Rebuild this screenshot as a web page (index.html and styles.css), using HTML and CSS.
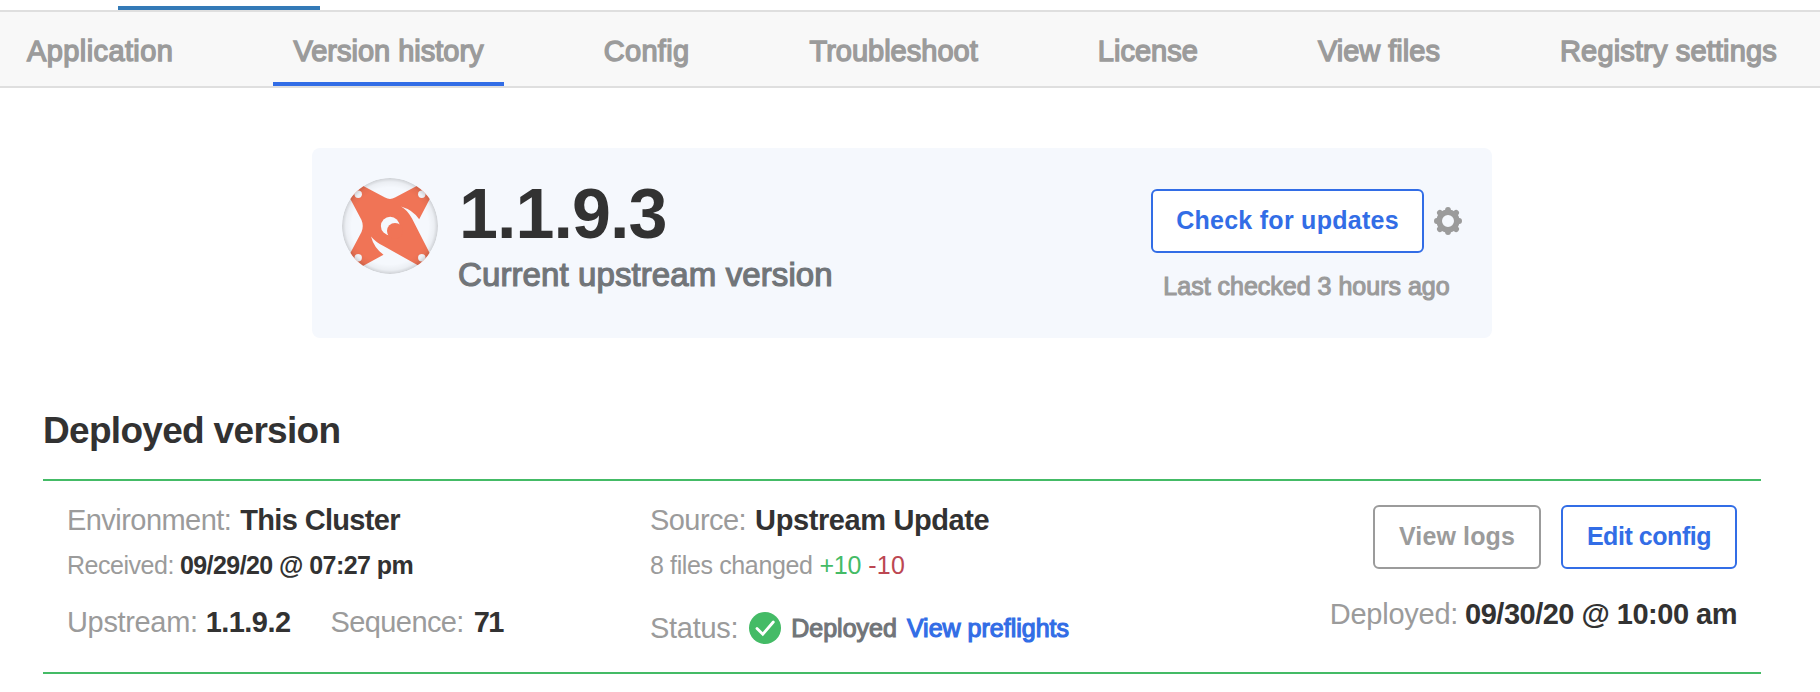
FILE: index.html
```
<!DOCTYPE html>
<html lang="en">
<head>
<meta charset="utf-8">
<title>Version history</title>
<link rel="stylesheet" href="styles.css">
</head>
<body>
<header class="topbar"><div class="topbar-active"></div></header>
<nav class="tabs">
  <a class="tab tab-application">Application</a>
  <a class="tab active">Version history</a>
  <a class="tab tab-config">Config</a>
  <a class="tab">Troubleshoot</a>
  <a class="tab">License</a>
  <a class="tab">View files</a>
  <a class="tab tab-registry">Registry settings</a>
</nav>
<main>
  <section class="card">
    <svg class="logo" viewBox="0 0 96 96">
      <defs>
        <clipPath id="disc"><circle cx="48" cy="48" r="48"/></clipPath>
        <radialGradient id="rim">
          <stop offset=".8" stop-color="#000" stop-opacity="0"/>
          <stop offset=".92" stop-color="#000" stop-opacity=".04"/>
          <stop offset="1" stop-color="#000" stop-opacity=".16"/>
        </radialGradient>
      </defs>
      <g clip-path="url(#disc)">
        <path fill="#f07456" d="M9 1.500L43 19.500Q48 22.300 53 19.500L87 1.500L94.500 8L77.200 41.300Q71 32 59 28.500Q65 31.500 70 40.500L94 87.500L87 93.500L41.500 68Q34 64.500 29 58.500Q32 70 41.500 76.700L9 94.500L2 87L19.500 54Q22 48 19.500 42L2 9Z"/>
        <g fill="#f5f8fd"><circle cx="16.200" cy="16.200" r="3.700"/><circle cx="79.800" cy="16.200" r="3.700"/><circle cx="16.200" cy="79.800" r="3.700"/><circle cx="79.800" cy="79.800" r="3.700"/><circle cx="48.200" cy="48" r="9.300"/></g>
        <circle cx="53" cy="53" r="8" fill="#f07456"/>
        <circle cx="48" cy="48" r="48" fill="url(#rim)"/>
      </g>
    </svg>
    <div class="card-text">
      <div class="version">1.1.9.3</div>
      <div class="caption">Current upstream version</div>
    </div>
    <div class="updates">
      <div class="updates-row">
        <button class="btn btn-check">Check for updates</button>
        <svg class="gear" viewBox="-14 -14 28 28" fill="none" stroke="#9b9b9b">
          <circle r="8.800" stroke-width="5.600"/>
          <path stroke-width="5.800" stroke-linecap="round" d="M0-11.100V-9M0 11.100V9M-11.100 0H-9M11.100 0H9M-8.100-8.100L-7-7M8.100 8.100L7 7M-8.100 8.100L-7 7M8.100-8.100L7-7"/>
        </svg>
      </div>
      <div class="checked">Last checked 3 hours ago</div>
    </div>
  </section>
  <h2 class="heading">Deployed version</h2>
  <section class="panel">
    <div class="col col-first">
      <div class="line"><span class="label environment">Environment:</span><b class="cluster">This Cluster</b></div>
      <div class="line small"><span class="label">Received:</span><b>09/29/20 @ 07:27 pm</b></div>
      <div class="line last"><span class="label upstream">Upstream:</span><b>1.1.9.2</b><span class="label sequence">Sequence:</span><b class="number">71</b></div>
    </div>
    <div class="col">
      <div class="line"><span class="label environment">Source:</span><b class="source">Upstream Update</b></div>
      <div class="line small files"><span>8 files changed</span><span class="added">+10</span><span class="removed">-10</span></div>
      <div class="line status"><span class="label">Status:</span>
        <svg class="check" viewBox="0 0 32 32"><circle cx="16" cy="16" r="16" fill="#44bb66"/><path d="M8 16.400L13.800 22.200L24.300 10" fill="none" stroke="#fff" stroke-width="2.800" stroke-linecap="round"/></svg>
        <span class="deployed">Deployed</span><a class="preflights">View preflights</a></div>
    </div>
    <div class="col col-right">
      <div class="actions"><button class="btn btn-logs">View logs</button><button class="btn btn-edit">Edit config</button></div>
      <div class="line date"><span class="label">Deployed:</span><b>09/30/20 @ 10:00 am</b></div>
    </div>
  </section>
</main>
</body>
</html>
```
FILE: styles.css
```
* { box-sizing: border-box; }
body {
  margin: 0;
  background: #fff;
  color: #323232;
  font-family: "Liberation Sans", Arial, sans-serif;
  white-space: nowrap;
}
.topbar { height: 12px; border-bottom: 2px solid #dfdfdf; padding: 6px 0 0 118px; }
.topbar-active { width: 202px; height: 4px; background: #337ab7; }
.tabs {
  display: flex;
  justify-content: space-between;
  height: 76px;
  padding: 0 23px 0 7px;
  background: #f8f8f8;
  border-bottom: 2px solid #dfdfdf;
}
.tab {
  padding: 4px 20px 0;
  font-size: 29px;
  line-height: 71px;
  color: #9b9b9b;
  -webkit-text-stroke: 1.4px #9b9b9b;
}
.tab-application { letter-spacing: .4px; }
.tab-config { letter-spacing: .3px; }
.tab-registry { letter-spacing: .15px; }
.tab.active { border-bottom: 4px solid #326de6; height: 74px; }
.card {
  display: flex;
  width: 1180px;
  height: 190px;
  margin: 60px 0 0 312px;
  padding: 30px;
  border-radius: 8px;
  background: #f5f8fd;
}
.logo { width: 96px; height: 96px; flex: none; }
.card-text { margin-left: 20px; }
.version { font-size: 70px; line-height: 70px; font-weight: bold; letter-spacing: -.94px; padding: 1px 0 0 1px; height: 71px; }
.caption { margin-top: 6px; font-size: 33px; line-height: 40px; color: #717579; -webkit-text-stroke: 1.2px #717579; letter-spacing: .1px; }
.updates { margin-left: auto; padding-top: 11px; text-align: center; }
.updates-row { display: flex; align-items: center; }
.btn {
  height: 64px;
  padding: 0 0 2px;
  border: 2px solid #326de6;
  border-radius: 6px;
  background: #fff;
  color: #326de6;
  font: bold 25px "Liberation Sans", Arial, sans-serif;
  white-space: nowrap;
}
.btn-check { width: 273px; letter-spacing: .27px; }
.gear { width: 28px; height: 28px; margin-left: 10px; }
.checked { margin-top: 18px; font-size: 25px; line-height: 30px; color: #9b9b9b; -webkit-text-stroke: 1.1px #9b9b9b; }
.heading { margin: 71px 0 26px 43px; font-size: 37px; line-height: 44px; letter-spacing: -.69px; }
.panel {
  display: flex;
  width: 1718px;
  height: 195px;
  margin-left: 43px;
  padding: 21px 24px 0;
  border-top: 2px solid #44bb66;
  border-bottom: 2px solid #44bb66;
}
.col-first { width: 583px; }
.col-right { margin-left: auto; padding-top: 3px; }
.line { display: flex; align-items: center; height: 36px; font-size: 29px; line-height: 36px; letter-spacing: -.55px; }
.label { color: #9b9b9b; margin-right: 8px; }
.environment { margin-right: 9px; }
.cluster { letter-spacing: -.66px; }
.source { letter-spacing: -.39px; }
.small { height: 30px; margin-top: 12px; font-size: 25px; line-height: 30px; }
.small .label { margin-right: 6px; letter-spacing: -.47px; }
.small b { letter-spacing: -.57px; }
.last { margin-top: 24px; }
.upstream { letter-spacing: -.34px; }
.sequence { margin: 0 10px 0 40px; letter-spacing: -.6px; }
.number { letter-spacing: -1.8px; }
.files { gap: 7px; color: #9b9b9b; letter-spacing: -.38px; }
.added { color: #44bb66; letter-spacing: -.25px; }
.removed { color: #bc4752; letter-spacing: .3px; }
.status { margin-top: 30px; letter-spacing: -.29px; }
.status .label { margin-right: 11px; }
.check { width: 32px; height: 32px; margin-right: 10px; }
.deployed, .preflights { font-size: 25px; letter-spacing: 0; }
.deployed { color: #717579; -webkit-text-stroke: 1.1px #717579; margin-right: 10px; }
.preflights { color: #326de6; -webkit-text-stroke: 1.2px #326de6; }
.actions { display: flex; justify-content: flex-end; gap: 20px; }
.btn-logs { width: 168px; border-color: #9b9b9b; color: #9b9b9b; letter-spacing: .13px; }
.btn-edit { width: 176px; letter-spacing: -.45px; }
.date { margin-top: 27px; justify-content: flex-end; letter-spacing: -.5px; }
.date .label { letter-spacing: -.25px; margin-right: 7px; }
```
